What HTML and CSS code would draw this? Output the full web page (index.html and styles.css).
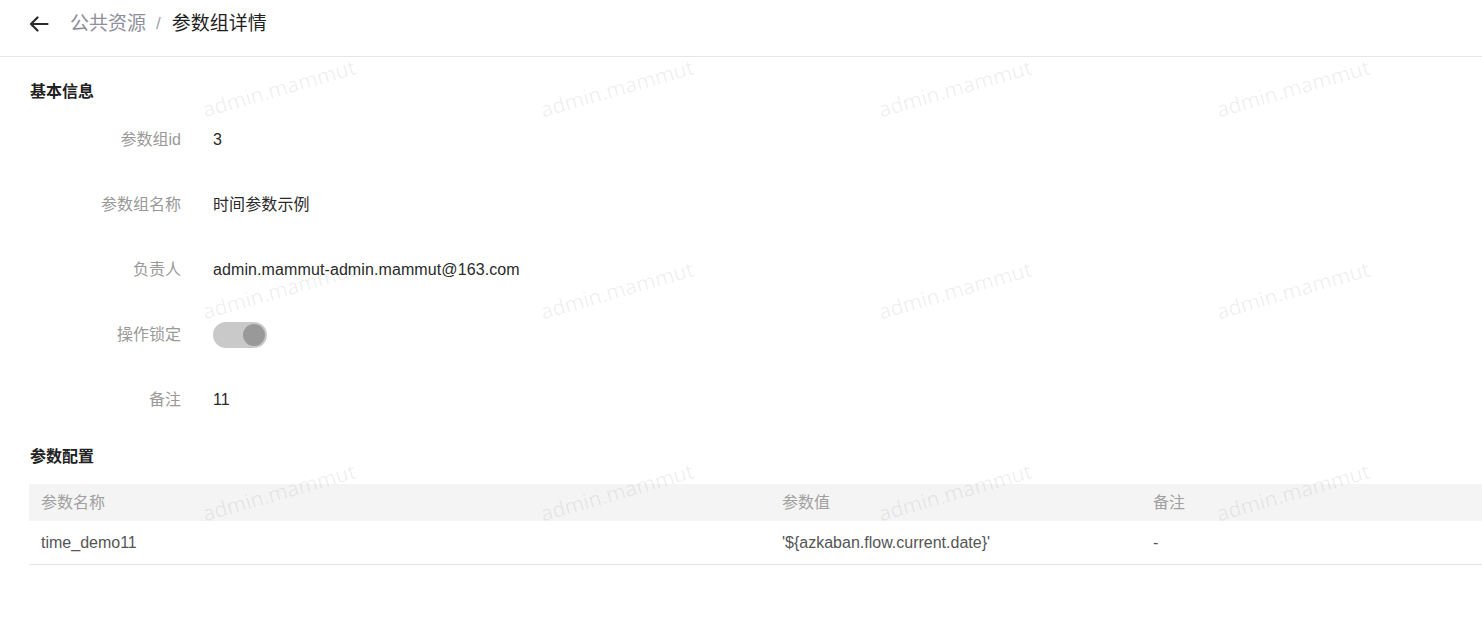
FILE: index.html
```html
<!DOCTYPE html>
<html lang="zh-CN">
<head>
<meta charset="utf-8">
<title>参数组详情</title>
<link rel="stylesheet" href="styles.css">
</head>
<body>
<div class="page">
  <header class="topbar">
    <span class="back">
      <svg width="20" height="16" viewBox="0 0 20 16" fill="none" stroke="#2b2b2b" stroke-width="2.2" stroke-linecap="round" stroke-linejoin="round"><path d="M18.5 8H2M8.5 1.5L2 8l6.5 6.5"/></svg>
    </span>
    <nav class="crumbs">
      <span class="crumb-link">公共资源</span>
      <span class="crumb-sep">/</span>
      <span class="crumb-current">参数组详情</span>
    </nav>
  </header>
  <main class="content">
    <h2 class="section-title first">基本信息</h2>
    <div class="form">
      <div class="row"><div class="label">参数组id</div><div class="value">3</div></div>
      <div class="row"><div class="label">参数组名称</div><div class="value">时间参数示例</div></div>
      <div class="row"><div class="label">负责人</div><div class="value">admin.mammut-admin.mammut@163.com</div></div>
      <div class="row"><div class="label">操作锁定</div><div class="value"><span class="switch"><span class="knob"></span></span></div></div>
      <div class="row"><div class="label">备注</div><div class="value">11</div></div>
    </div>
    <h2 class="section-title second">参数配置</h2>
    <div class="table">
      <div class="thead">
        <div class="cell">参数名称</div>
        <div class="cell">参数值</div>
        <div class="cell">备注</div>
      </div>
      <div class="trow">
        <div class="cell">time_demo11</div>
        <div class="cell">'${azkaban.flow.current.date}'</div>
        <div class="cell">-</div>
      </div>
    </div>
  </main>
  <div class="watermarks">
    <span class="wm">admin.mammut</span><span class="wm">admin.mammut</span><span class="wm">admin.mammut</span><span class="wm">admin.mammut</span>
    <span class="wm">admin.mammut</span><span class="wm">admin.mammut</span><span class="wm">admin.mammut</span><span class="wm">admin.mammut</span>
    <span class="wm">admin.mammut</span><span class="wm">admin.mammut</span><span class="wm">admin.mammut</span><span class="wm">admin.mammut</span>
  </div>
</div>
</body>
</html>
```
FILE: styles.css
```css
* { box-sizing: border-box; }
html, body { margin: 0; padding: 0; background: #fff; }
body {
  font-family: "Liberation Sans", "Noto Sans CJK SC", sans-serif;
  font-size: 16px;
  color: #333;
  overflow: hidden;
}
.page { position: relative; width: 1482px; height: 632px; overflow: hidden; }

.topbar {
  height: 57px;
  border-bottom: 1px solid #e6e6ea;
  display: flex;
  align-items: flex-start;
  padding-left: 29px;
}
.back { display: flex; width: 20px; height: 16px; margin-top: 16px; }
.crumbs {
  display: flex;
  align-items: center;
  margin-left: 21px;
  height: 47px;
  font-size: 19px;
  line-height: 24px;
}
.crumb-link { color: #8f8f9c; }
.crumb-sep { color: #a0a0a8; margin: 0 11px 0 10px; font-size: 17px; }
.crumb-current { color: #1f1f1f; }

.content { padding-left: 29px; }
.section-title {
  margin: 0;
  padding-left: 1px;
  font-size: 16px;
  font-weight: bold;
  line-height: 24px;
  color: #222;
}
.section-title.first { margin-top: 23px; }
.section-title.second { margin-top: 13px; }

.form { margin-top: 3px; display: flex; flex-direction: column; }
.row { height: 65px; display: flex; align-items: center; }
.label { width: 152px; text-align: right; color: #999; line-height: 24px; }
.value { margin-left: 32px; color: #2a2a2a; line-height: 24px; display: flex; align-items: center; letter-spacing: 0.1px; }

.switch {
  width: 54px; height: 26px;
  border-radius: 13px;
  background: #c9c9c9;
  display: flex; align-items: center; justify-content: flex-end;
  padding-right: 2px;
}
.knob { width: 22px; height: 22px; border-radius: 50%; background: #999; }

.table { margin-top: 15px; }
.thead, .trow {
  display: grid;
  grid-template-columns: 741px 371px 1fr;
}
.thead { height: 37px; background: #f4f4f4; color: #a0a0a0; align-items: center; }
.trow { height: 44px; border-bottom: 1px solid #e3e3e8; color: #555; align-items: center; }
.cell { padding-left: 12px; line-height: 22px; white-space: nowrap; }

.watermarks {
  position: absolute;
  top: -13px; left: 110px;
  display: grid;
  grid-template-columns: repeat(4, 338px);
  grid-auto-rows: 202px;
  pointer-events: none;
}
.wm {
  display: flex; align-items: center; justify-content: center;
  font-family: "Open Sans", sans-serif;
  font-size: 21px;
  color: rgba(0, 0, 0, 0.07);
  transform: rotate(-16deg);
  white-space: nowrap;
}
```
